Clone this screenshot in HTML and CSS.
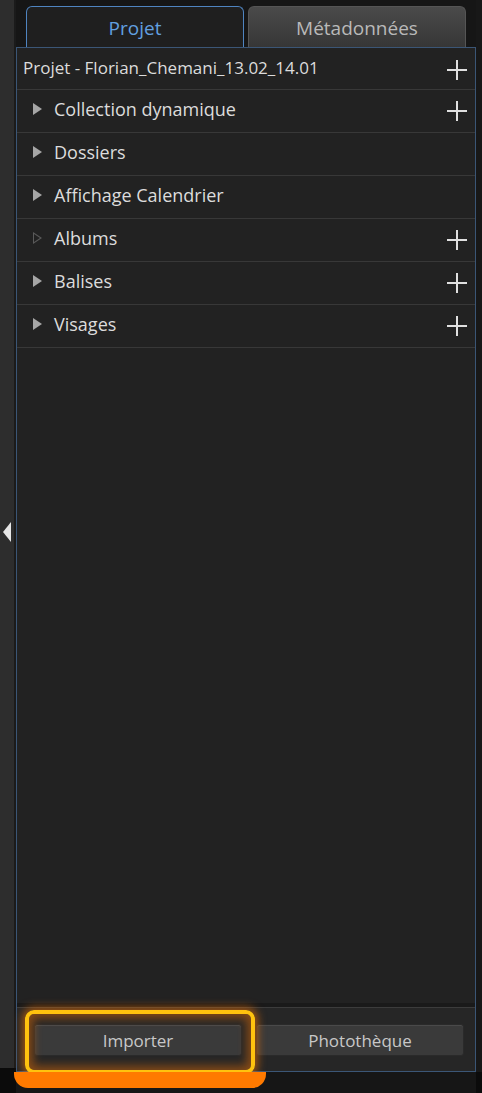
FILE: index.html
```html
<!DOCTYPE html>
<html lang="fr">
<head>
    <meta charset="UTF-8">
    <meta name="viewport" content="width=device-width, initial-scale=1.0">
    <title>Projet</title>
    <link rel="stylesheet" href="styles.css">
</head>
<body>
    <div class="app">
        <div class="side-strip">
            <span class="collapse-arrow"></span>
        </div>

        <div class="main">
            <div class="tabs">
                <div class="tab active">Projet</div>
                <div class="tab">Métadonnées</div>
            </div>

            <div class="panel">
                <div class="tree">
                    <div class="row header">
                        <span class="label">Projet - Florian_Chemani_13.02_14.01</span>
                        <span class="plus"></span>
                    </div>
                    <div class="row">
                        <span class="arrow"></span>
                        <span class="label">Collection dynamique</span>
                        <span class="plus"></span>
                    </div>
                    <div class="row">
                        <span class="arrow"></span>
                        <span class="label">Dossiers</span>
                    </div>
                    <div class="row">
                        <span class="arrow"></span>
                        <span class="label">Affichage Calendrier</span>
                    </div>
                    <div class="row">
                        <span class="arrow empty"></span>
                        <span class="label">Albums</span>
                        <span class="plus"></span>
                    </div>
                    <div class="row">
                        <span class="arrow"></span>
                        <span class="label">Balises</span>
                        <span class="plus"></span>
                    </div>
                    <div class="row">
                        <span class="arrow"></span>
                        <span class="label">Visages</span>
                        <span class="plus"></span>
                    </div>
                </div>

                <div class="footer">
                    <button type="button" class="btn">Importer</button>
                    <button type="button" class="btn">Photothèque</button>
                </div>
            </div>
        </div>

        <div class="right-edge"></div>

        <div class="highlight"></div>
        <div class="highlight-bar"></div>
    </div>
</body>
</html>
```

FILE: styles.css
```css
body {
    margin: 0;
    background-color: #0b0b0b;
    font-family: "Open Sans", "Noto Sans", sans-serif;
}
.app {
    position: relative;
    display: flex;
    width: 482px;
    height: 1093px;
    overflow: hidden;
}
.side-strip {
    flex: none;
    width: 16px;
    height: 1068px;
    background-color: #2d2d2d;
    border-right: 2px solid #1b1b1b;
    display: flex;
    align-items: center;
    justify-content: flex-end;
    padding-bottom: 4px;
    box-sizing: border-box;
}
.collapse-arrow {
    width: 0;
    height: 0;
    border-top: 10px solid transparent;
    border-bottom: 10px solid transparent;
    border-right: 8px solid #e6e6e6;
    margin-right: 3px;
}
.main {
    flex: none;
    width: 460px;
    display: flex;
    flex-direction: column;
    background-color: #161616;
}
.tabs {
    display: flex;
    gap: 4px;
    height: 47px;
    padding: 6px 0 0 10px;
    box-sizing: border-box;
}
.tab {
    width: 218px;
    display: flex;
    align-items: center;
    justify-content: center;
    border-radius: 6px 6px 0 0;
    font-size: 19px;
    color: #b9b9b9;
    background: linear-gradient(#4a4a4a, #363636);
    border: 1px solid #555;
    border-bottom: none;
    box-sizing: border-box;
    padding-top: 2px;
}
.tab.active {
    color: #62a0e0;
    background: #1f1f1f;
    border: 1px solid #4f84c0;
    border-bottom: none;
}
.panel {
    height: 1025px;
    background-color: #222222;
    border: 1px solid #3b5676;
    box-sizing: border-box;
    display: flex;
    flex-direction: column;
}
.tree {
    flex: 1;
    border-bottom: 4px solid #1a1a1a;
}
.row {
    display: flex;
    align-items: center;
    height: 43px;
    border-bottom: 1px solid #383838;
    box-sizing: border-box;
    padding: 0 8px 5px 16px;
    color: #dcdcdc;
    font-size: 18px;
}
.row.header {
    height: 42px;
    padding: 0 8px 2px 6px;
    font-size: 17px;
}
.label {
    flex: 1;
}
.arrow {
    position: relative;
    width: 0;
    height: 0;
    border-top: 6px solid transparent;
    border-bottom: 6px solid transparent;
    border-left: 9px solid #a6a6a6;
    margin-right: 12px;
}
.arrow.empty {
    border-left-color: #5a5a5a;
}
.arrow.empty::after {
    content: "";
    position: absolute;
    left: -8px;
    top: -4px;
    border-top: 4px solid transparent;
    border-bottom: 4px solid transparent;
    border-left: 6px solid #222222;
}
.plus {
    position: relative;
    width: 20px;
    height: 20px;
}
.plus::before,
.plus::after {
    content: "";
    position: absolute;
    background-color: #e0e0e0;
}
.plus::before {
    left: 9px;
    top: 0;
    width: 2px;
    height: 20px;
}
.plus::after {
    left: 0;
    top: 9px;
    width: 20px;
    height: 2px;
}
.row .plus {
    margin-top: 5px;
}
.footer {
    height: 64px;
    border-top: 1px solid #3c3c3c;
    background-color: #262626;
    display: flex;
    gap: 14px;
    padding: 16px 10px 0 17px;
    box-sizing: border-box;
}
.btn {
    width: 208px;
    height: 32px;
    background-color: #3a3a3a;
    border: 1px solid #2a2a2a;
    border-radius: 3px;
    color: #c8c8c8;
    font-family: "Open Sans", "Noto Sans", sans-serif;
    font-size: 17px;
    box-shadow: inset 0 1px 0 #4a4a4a;
}
.right-edge {
    flex: none;
    width: 6px;
    background-color: #181818;
    height: 1072px;
}
.highlight {
    position: absolute;
    left: 25px;
    top: 1010px;
    width: 230px;
    height: 64px;
    border: 4px solid #ffc20e;
    border-radius: 9px;
    box-sizing: border-box;
    box-shadow: 0 0 8px 3px rgba(255, 120, 0, 0.55), inset 0 0 10px 4px rgba(255, 120, 0, 0.45);
}
.highlight-bar {
    position: absolute;
    left: 14px;
    top: 1072px;
    width: 252px;
    height: 16px;
    background-color: #ff7a00;
    border-radius: 0 0 14px 14px;
}
```
